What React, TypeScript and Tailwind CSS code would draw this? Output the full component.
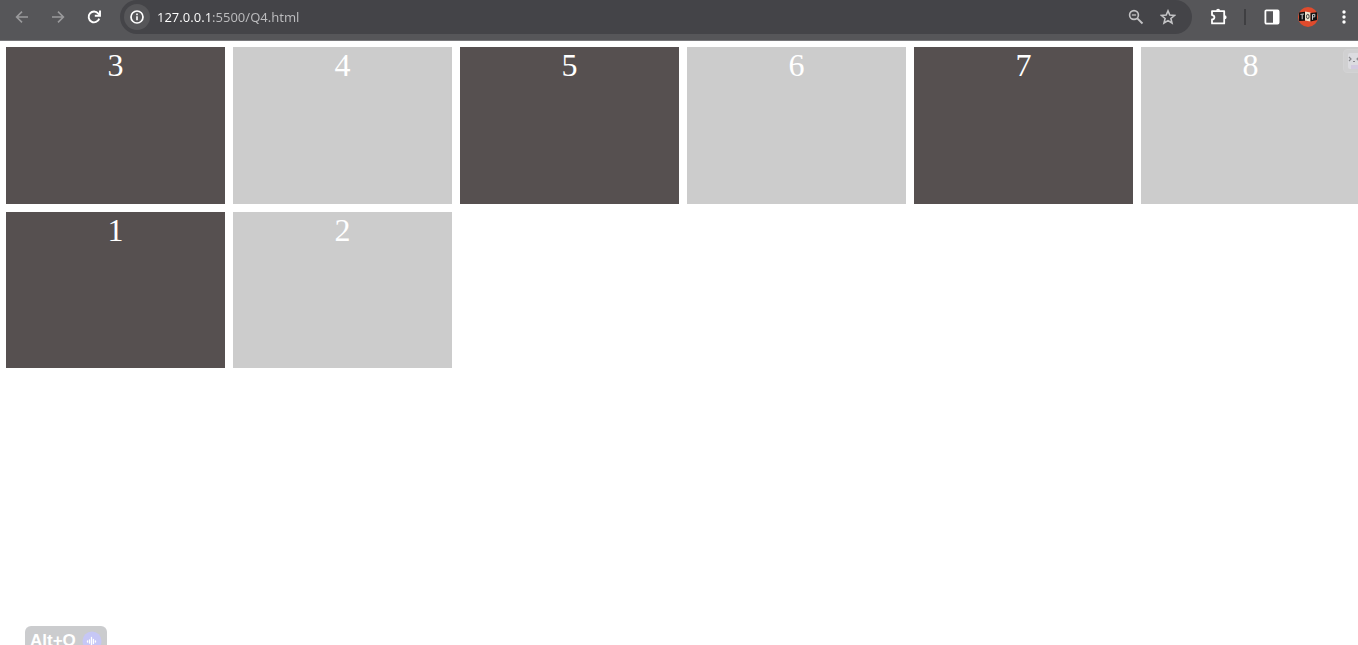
import type { ReactNode } from "react";

const tiles = [3, 4, 5, 6, 7, 8, 1, 2];

function IconButton({ label, className, children }: { label: string; className: string; children: ReactNode }) {
  return (
    <button type="button" aria-label={label} className={`flex shrink-0 items-center justify-center ${className}`}>
      {children}
    </button>
  );
}

function BackIcon() {
  return (
    <svg width="14" height="14" viewBox="0 0 14 14" fill="none" stroke="currentColor" strokeWidth="1.6">
      <path d="M13 7H2M7 1.6 1.6 7 7 12.4" />
    </svg>
  );
}

function ForwardIcon() {
  return (
    <svg width="14" height="14" viewBox="0 0 14 14" fill="none" stroke="currentColor" strokeWidth="1.6">
      <path d="M1 7h11M7 1.6 12.4 7 7 12.4" />
    </svg>
  );
}

function ReloadIcon() {
  return (
    <svg width="14" height="14" viewBox="0 0 14 14" fill="none" stroke="currentColor" strokeWidth="1.9">
      <path d="M12.2 8.6A5.4 5.4 0 1 1 11.3 3.6L12.4 5" />
      <path d="M13 0.6v5.2H7.8" />
    </svg>
  );
}

function InfoIcon() {
  return (
    <svg width="14" height="14" viewBox="0 0 14 14" fill="none" stroke="currentColor">
      <circle cx="7" cy="7" r="6" strokeWidth="1.7" />
      <path d="M7 6.3v4M7 3.6v1.6" strokeWidth="1.6" />
    </svg>
  );
}

function ZoomOutIcon() {
  return (
    <svg width="16" height="16" viewBox="0 0 16 16" fill="none" stroke="currentColor">
      <circle cx="6" cy="6" r="4.4" strokeWidth="1.6" />
      <path d="m9.3 9.3 5.2 5.2" strokeWidth="1.9" />
      <path d="M3.9 6h4.2" strokeWidth="1.3" />
    </svg>
  );
}

function StarIcon() {
  return (
    <svg width="16" height="16" viewBox="0 0 16 16" fill="none" stroke="currentColor" strokeWidth="1.6">
      <path d="m8 1.900 1.800 4.200 4.600.4-3.500 3 1.100 4.500L8 11.600 4 14l1.100-4.500-3.500-3 4.600-.4Z" />
    </svg>
  );
}

function PuzzleIcon() {
  return (
    <svg width="18" height="18" viewBox="0 0 18 18" fill="none" stroke="currentColor" strokeWidth="1.800" strokeLinejoin="round">
      <path d="M2 3.200h12.200v12.200H2v-3.900c1.400 0 2.400-.9 2.400-2.200S3.400 7.100 2 7.100Z" />
      <path d="M6.100 2.800a2 2 0 0 1 4 0ZM14.600 7.300a2 2 0 0 1 0 4Z" fill="currentColor" stroke="none" />
    </svg>
  );
}

function SidePanelIcon() {
  return (
    <svg width="16" height="16" viewBox="0 0 16 16" fill="none">
      <rect x="1.400" y="1.400" width="13.200" height="13.200" rx="1" stroke="currentColor" strokeWidth="1.800" />
      <path d="M9 1h5v14H9z" fill="currentColor" />
    </svg>
  );
}

function ProfileIcon() {
  return (
    <svg width="20" height="20" viewBox="0 0 20 20" fill="none">
      <circle cx="10" cy="10" r="10" fill="#df4b2d" />
      <path d="m1 5.500 6-.8v9L1 14Z" fill="#111" />
      <path d="m7 4.600 5.500 1v9L7 13.600Z" fill="#eee5cf" />
      <path d="m12.500 6 6.500-.8V13l-6.500 1.500Z" fill="#111" />
      <path d="M2.400 7.400 6 7M4.200 7.300v5" stroke="#ccc" strokeWidth="1" />
      <ellipse cx="9.800" cy="9.500" rx="1.300" ry="2.200" stroke="#444" strokeWidth="1" />
      <path d="M14.500 12.800V7.500l2.300-.2v2.500l-2.300.2" stroke="#ccc" strokeWidth="1" />
    </svg>
  );
}

function BrowserBar() {
  return (
    <header className="flex h-[41px] items-start border-b border-[#77777a] bg-[#565659] pl-2">
      <nav aria-label="Navigation" className="flex h-[34px] items-center gap-2 text-[#9a9a9c]">
        <IconButton label="Back" className="size-7"><BackIcon /></IconButton>
        <IconButton label="Forward" className="size-7"><ForwardIcon /></IconButton>
        <IconButton label="Reload" className="size-7 text-white"><ReloadIcon /></IconButton>
      </nav>
      <div className="ml-3 flex h-[34px] min-w-0 flex-1 items-center rounded-full bg-[#444448] pr-2.5 pl-1">
        <IconButton label="Site information" className="size-[26px] rounded-full bg-[#565659] text-white"><InfoIcon /></IconButton>
        <input
          type="text"
          aria-label="Address"
          defaultValue="127.0.0.1:5500/Q4.html"
          className="ml-[7px] h-6 min-w-0 flex-1 bg-[linear-gradient(90deg,#ffffff_54px,#bdbdbf_54px)] bg-clip-text font-['Noto_Sans',sans-serif] text-[13px] text-transparent caret-white outline-none"
        />
        <div className="flex items-center gap-1 text-[#c3c3c5]">
          <IconButton label="Zoom" className="size-7"><ZoomOutIcon /></IconButton>
          <IconButton label="Bookmark this page" className="size-7"><StarIcon /></IconButton>
        </div>
      </div>
      <div className="flex h-[34px] items-center pl-3 text-white">
        <IconButton label="Extensions" className="size-7 pl-0.5"><PuzzleIcon /></IconButton>
        <span className="mx-3 h-4 w-0.5 bg-[#3f3f42]" />
        <IconButton label="Side panel" className="size-7"><SidePanelIcon /></IconButton>
        <IconButton label="Profile" className="ml-2 size-7"><ProfileIcon /></IconButton>
        <IconButton label="Menu" className="ml-2 size-7">
          <svg width="4" height="14" viewBox="0 0 4 14" fill="currentColor">
            <circle cx="2" cy="2" r="1.700" />
            <circle cx="2" cy="7" r="1.700" />
            <circle cx="2" cy="12" r="1.700" />
          </svg>
        </IconButton>
      </div>
    </header>
  );
}

export default function App() {
  return (
    <div className="relative h-screen overflow-hidden bg-white">
      <BrowserBar />
      <main className="-mr-0.5 grid grid-cols-6 grid-rows-[157px_156px] gap-2 pt-1.5 pl-1.5 font-['Liberation_Serif',serif] text-[32px] leading-9 text-white">
        {tiles.map((tile) => (
          <div key={tile} className="bg-[#ccc] text-center odd:bg-[#565050]">
            {tile}
          </div>
        ))}
      </main>
      <button
        type="button"
        aria-label="Open assistant"
        className="absolute top-[49px] -right-3 flex h-6 w-[27px] items-center rounded border border-[#d3d3d4] bg-[#d0d0d1] pl-1"
      >
        <svg width="20" height="18" viewBox="0 0 20 18" fill="none">
          <rect x="0" y="1" width="20" height="16" rx="2" fill="#dcdce0" />
          <path d="M3 13h17v4H3z" fill="#d3cbe0" />
          <path d="m1 5 2 2-2 2M11 5 9 7l2 2" stroke="#88888c" strokeWidth="1.200" />
          <path d="M5 9.500h2" stroke="#88888c" />
        </svg>
      </button>
      <button
        type="button"
        className="absolute -bottom-2.5 left-[25px] flex h-[29px] w-[82px] items-center gap-1.5 rounded-md bg-[#cbccce] pl-[5px] font-['Liberation_Sans',sans-serif] text-[17px] font-bold text-white"
      >
        Alt+Q
        <svg width="20" height="20" viewBox="0 0 20 20" fill="none">
          <circle cx="10" cy="10" r="9.500" fill="#c6c7f6" />
          <path d="M5.500 10v1M7.500 9v3M9.500 6.500v8M11.500 8.500v4M13.500 10v1" stroke="#fff" strokeWidth="1.300" strokeLinecap="round" />
        </svg>
      </button>
    </div>
  );
}
